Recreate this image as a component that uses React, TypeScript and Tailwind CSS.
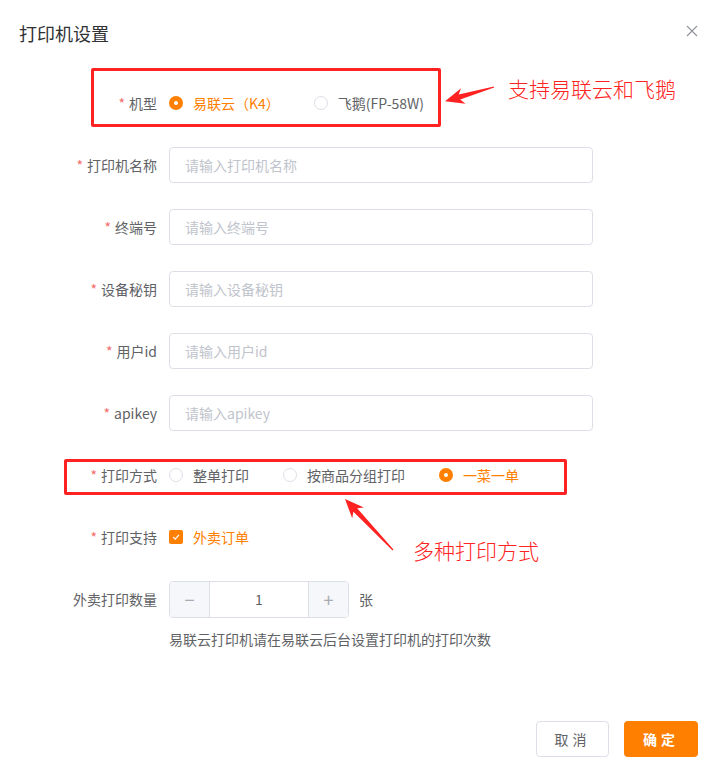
import React from "react";

const font = { fontFamily: '"Noto Sans CJK SC", "Noto Sans", sans-serif' };

function Label({ text, required = true }: { text: string; required?: boolean }) {
    return (
        <div className="w-[142px] shrink-0 pr-[12px] text-right text-[14px] text-[#606266]">
            {required && <span className="mr-[4px] text-[#f56c6c]">*</span>}
            {text}
        </div>
    );
}

function Radio({ label, checked = false }: { label: string; checked?: boolean }) {
    return (
        <div className="mr-[34px] flex items-center">
            <span
                className={
                    checked
                        ? "flex h-[14px] w-[14px] items-center justify-center rounded-full bg-[#ff8000]"
                        : "h-[14px] w-[14px] rounded-full border border-[#dcdfe6] bg-white"
                }
            >
                {checked && <span className="h-[4px] w-[4px] rounded-full bg-white" />}
            </span>
            <span className={"pl-[10px] text-[14px] " + (checked ? "text-[#ff8000]" : "text-[#606266]")}>
                {label}
            </span>
        </div>
    );
}

function TextRow({ label, placeholder }: { label: string; placeholder: string }) {
    return (
        <div className="flex h-[36px] items-center">
            <Label text={label} />
            <div className="flex h-[36px] w-[424px] items-center rounded-[4px] border border-[#dcdfe6] px-[15px] text-[14px] text-[#c0c4cc]">
                {placeholder}
            </div>
        </div>
    );
}

function Arrow({ x, y, angle, len }: { x: number; y: number; angle: number; len: number }) {
    const L = len;
    const pts = [
        [0, -0.6],
        [L - 15, -2.6],
        [L - 19, -8],
        [L, 0],
        [L - 19, 8],
        [L - 15, 2.6],
        [0, 0.6],
    ]
        .map((p) => p.join(","))
        .join(" ");
    return <polygon points={pts} fill="#ff2222" transform={`translate(${x},${y}) rotate(${angle})`} />;
}

export default function App() {
    return (
        <div className="relative h-[778px] w-[718px] overflow-hidden bg-white" style={font}>
            {/* header */}
            <div className="flex items-center justify-between pl-[19px] pr-[20px] pt-[20px]">
                <div className="text-[18px] leading-[26px] text-[#303133]">打印机设置</div>
                <svg width="12" height="12" viewBox="0 0 12 12" className="-mt-[4px]">
                    <path d="M1 1L11 11M11 1L1 11" stroke="#909399" strokeWidth="1.1" />
                </svg>
            </div>

            {/* form */}
            <div className="flex flex-col gap-[26px] pl-[27px] pt-[39px]">
                <div className="flex h-[36px] items-center">
                    <Label text="机型" />
                    <Radio label="易联云（K4）" checked />
                    <Radio label="飞鹅(FP-58W)" />
                </div>
                <TextRow label="打印机名称" placeholder="请输入打印机名称" />
                <TextRow label="终端号" placeholder="请输入终端号" />
                <TextRow label="设备秘钥" placeholder="请输入设备秘钥" />
                <TextRow label="用户id" placeholder="请输入用户id" />
                <TextRow label="apikey" placeholder="请输入apikey" />
                <div className="flex h-[36px] items-center">
                    <Label text="打印方式" />
                    <Radio label="整单打印" />
                    <Radio label="按商品分组打印" />
                    <Radio label="一菜一单" checked />
                </div>
                <div className="flex h-[36px] items-center">
                    <Label text="打印支持" />
                    <span className="flex h-[14px] w-[14px] items-center justify-center rounded-[2px] bg-[#ff8000]">
                        <svg width="10" height="10" viewBox="0 0 10 10">
                            <path d="M2.2 5.2L4.2 7.2L8 2.8" stroke="white" strokeWidth="1.2" fill="none" />
                        </svg>
                    </span>
                    <span className="pl-[10px] text-[14px] text-[#ff8000]">外卖订单</span>
                </div>
                <div className="flex flex-col">
                    <div className="flex h-[36px] items-center">
                        <Label text="外卖打印数量" required={false} />
                        <div className="flex h-[37px] w-[180px] overflow-hidden rounded-[4px] border border-[#dcdfe6]">
                            <div className="flex w-[40px] items-center justify-center border-r border-[#dcdfe6] bg-[#f5f7fa] text-[18px] text-[#a8abb2]">
                                −
                            </div>
                            <div className="flex flex-1 items-center justify-center text-[14px] text-[#606266]">1</div>
                            <div className="flex w-[40px] items-center justify-center border-l border-[#dcdfe6] bg-[#f5f7fa] text-[18px] text-[#a8abb2]">
                                +
                            </div>
                        </div>
                        <span className="pl-[10px] text-[14px] text-[#606266]">张</span>
                    </div>
                    <div className="mt-[12px] pl-[142px] text-[14px] leading-[20px] text-[#606266]">
                        易联云打印机请在易联云后台设置打印机的打印次数
                    </div>
                </div>
            </div>

            {/* footer */}
            <div className="absolute bottom-[21px] right-[20px] flex gap-[15px]">
                <button className="h-[36px] w-[73px] rounded-[4px] border border-[#dcdfe6] bg-white text-[14px] tracking-[4px] text-[#606266]">
                    取消
                </button>
                <button className="h-[36px] w-[74px] rounded-[4px] bg-[#ff8000] text-[14px] font-bold tracking-[4px] text-white">
                    确定
                </button>
            </div>

            {/* annotations */}
            <div className="pointer-events-none absolute left-[91px] top-[68px] h-[59px] w-[350px] rounded-[2px] border-[3px] border-[#ff2222]" />
            <div className="pointer-events-none absolute left-[64px] top-[459px] h-[36px] w-[503px] rounded-[2px] border-[3px] border-[#ff2222]" />
            <div className="pointer-events-none absolute left-[508px] top-[74px] text-[21px] font-light leading-[28px] text-[#ff2222]">
                支持易联云和飞鹅
            </div>
            <div className="pointer-events-none absolute left-[413px] top-[536px] text-[21px] font-light leading-[28px] text-[#ff2222]">
                多种打印方式
            </div>
            <svg className="pointer-events-none absolute left-0 top-0" width="718" height="778">
                <Arrow x={494} y={87} angle={163.7} len={51} />
                <Arrow x={393} y={550} angle={226.7} len={70} />
            </svg>
        </div>
    );
}
